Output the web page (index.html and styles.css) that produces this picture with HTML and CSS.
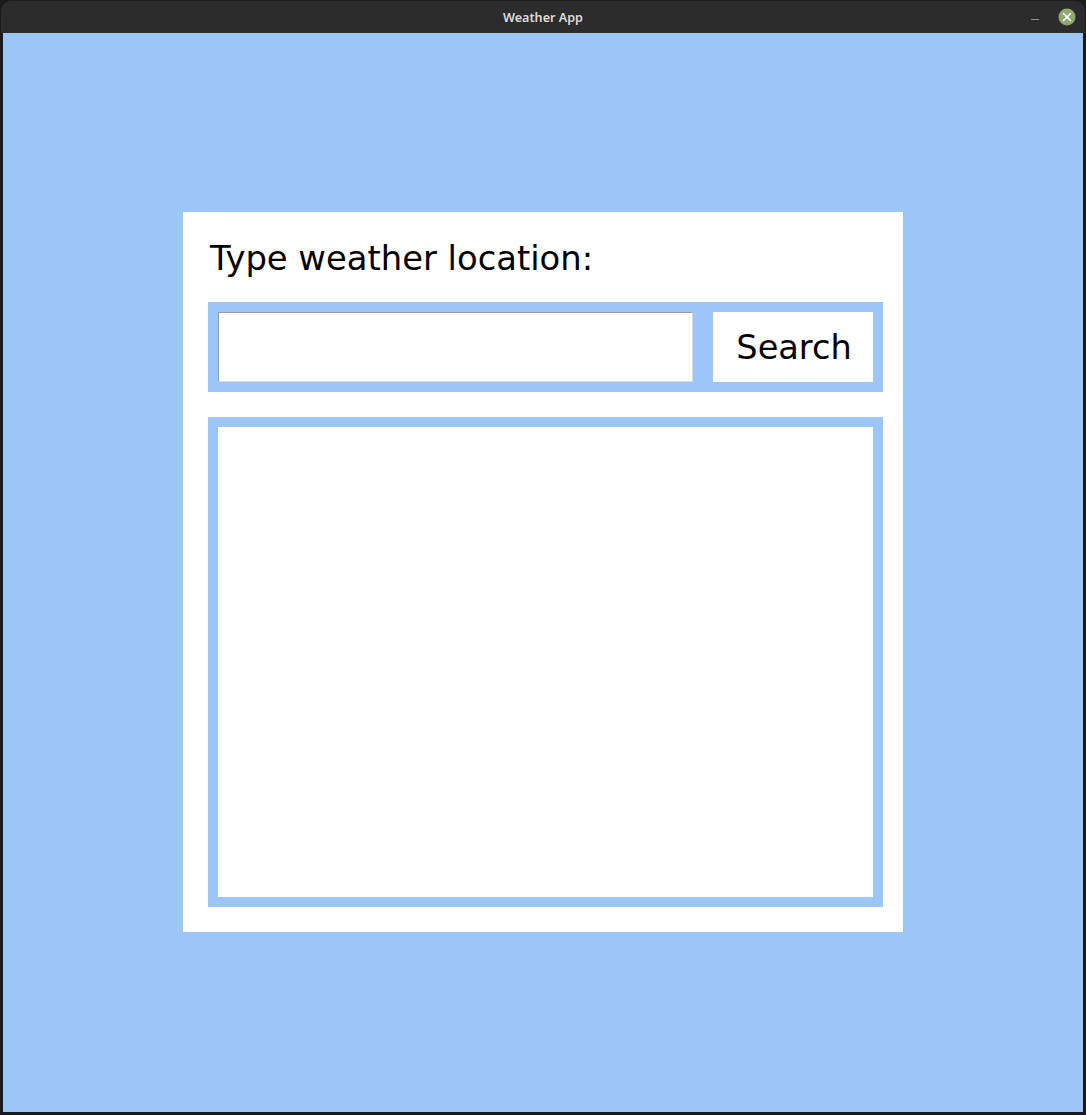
FILE: index.html
```html
<!DOCTYPE html>
<html>
<head>
<meta charset="utf-8">
<title>Weather App</title>
<link rel="stylesheet" href="styles.css">
</head>
<body>
<div class="window">
  <div class="titlebar">
    <span class="title">Weather App</span>
    <div class="controls">
      <span class="minimize"></span>
      <span class="close">
        <svg width="18" height="18" viewBox="0 0 18 18"><circle cx="9" cy="9" r="8.5" fill="#8ea86e"/><path d="M5.6 5.6 L12.4 12.4 M12.4 5.6 L5.6 12.4" stroke="#ffffff" stroke-width="1.6" stroke-linecap="round"/></svg>
      </span>
    </div>
  </div>
  <div class="content">
    <div class="card">
      <div class="label">Type weather location:</div>
      <div class="search-frame">
        <input class="location-input" type="text">
        <div class="search-btn">Search</div>
      </div>
      <div class="results-frame">
        <div class="results"></div>
      </div>
    </div>
  </div>
</div>
</body>
</html>
```
FILE: styles.css
```css
html, body {
  margin: 0;
  padding: 0;
  background: #1c1c1c;
}
.window {
  width: 1086px;
  height: 1115px;
  display: flex;
  flex-direction: column;
  background: #1b1b1b;
  border-radius: 11px 11px 0 0;
  overflow: hidden;
}
.titlebar {
  height: 32px;
  flex: none;
  background: #2c2c2c;
  border-radius: 10px 10px 0 0;
  margin: 1px 1px 0 1px;
  position: relative;
  display: flex;
  align-items: center;
  justify-content: center;
}
.title {
  font-family: "Noto Sans", "DejaVu Sans", sans-serif;
  font-weight: 600;
  font-size: 12.6px;
  color: #dddddd;
  margin-top: 1px;
}
.controls {
  position: absolute;
  right: 9px;
  top: 7px;
  display: flex;
  align-items: center;
  gap: 19px;
}
.minimize {
  width: 8px;
  height: 1px;
  background: #9a9a9a;
  margin-top: 4px;
}
.close {
  width: 18px;
  height: 18px;
  display: block;
}
.close svg { display: block; }
.content {
  flex: 1;
  margin: -1px 3px 3px 3px;
  background: #9dc6f8;
  display: flex;
  align-items: center;
  justify-content: center;
}
.card {
  width: 720px;
  height: 720px;
  box-sizing: border-box;
  background: #ffffff;
  padding: 25px 20px 25px 25px;
  display: flex;
  flex-direction: column;
}
.label {
  font-family: "DejaVu Sans", sans-serif;
  font-size: 33.8px;
  line-height: 38px;
  color: #000000;
  padding: 3px 0 0 2px;
  margin-bottom: 24px;
}
.search-frame {
  background: #9dc6f8;
  padding: 10px;
  display: flex;
  gap: 20px;
  height: 70px;
}
.location-input {
  width: 475px;
  height: 70px;
  box-sizing: border-box;
  margin: 0;
  padding: 0 6px;
  background: #ffffff;
  border-style: solid;
  border-width: 1px;
  border-color: #9a9a9a #dcdcdc #dcdcdc #9a9a9a;
  font-family: "DejaVu Sans", sans-serif;
  font-size: 33px;
  outline: none;
}
.search-btn {
  width: 160px;
  height: 70px;
  box-sizing: border-box;
  padding-left: 2px;
  background: #ffffff;
  display: flex;
  align-items: center;
  justify-content: center;
  font-family: "DejaVu Sans", sans-serif;
  font-size: 33.6px;
  color: #000000;
}
.results-frame {
  margin-top: 25px;
  flex: 1;
  background: #9dc6f8;
  padding: 10px;
  display: flex;
}
.results {
  flex: 1;
  background: #ffffff;
}
```
